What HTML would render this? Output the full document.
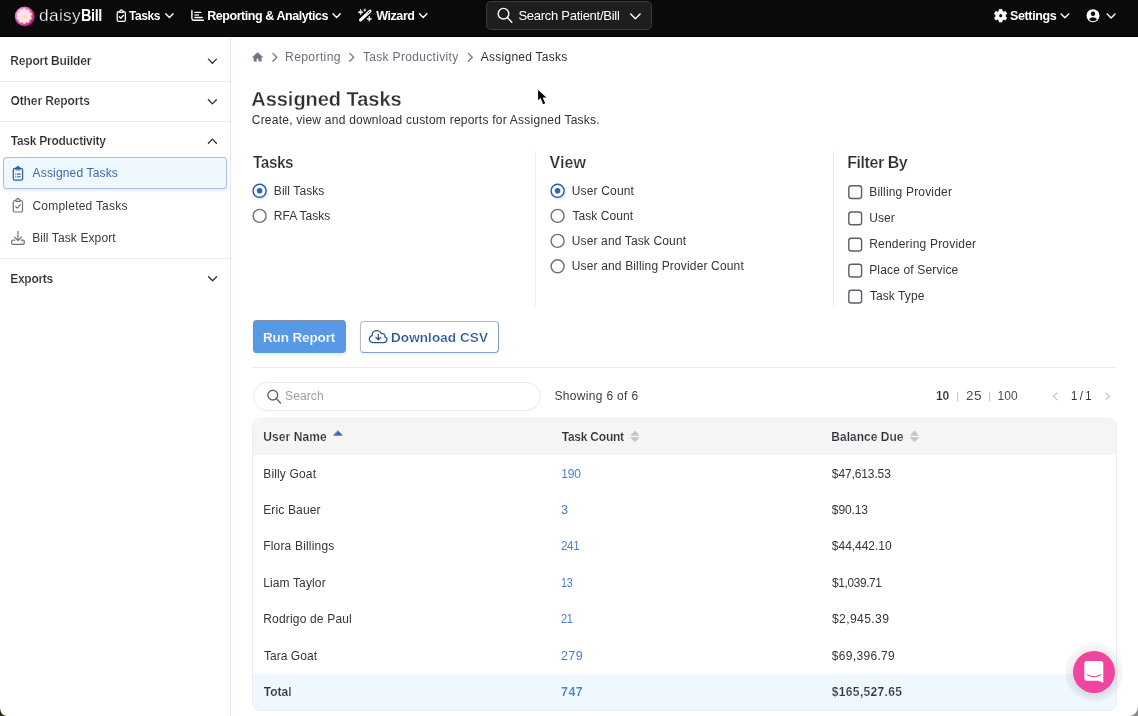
<!DOCTYPE html>
<html lang="en">
<head>
<meta charset="utf-8">
<title>Assigned Tasks - daisyBill</title>
<style>
*{box-sizing:border-box;margin:0;padding:0}
html,body{width:1138px;height:716px;overflow:hidden;background:#fff}
body{font-family:"Liberation Sans",Arial,sans-serif;color:#2f3037;font-size:12px;position:relative}
svg{display:block;position:absolute;overflow:visible}
#txt{position:absolute;left:0;top:0;width:1138px;height:716px;will-change:transform;z-index:5}
.x{position:absolute;white-space:nowrap;transform-origin:0 50%;z-index:5}

/* text classes */
.lg{font-size:17px;line-height:22px;color:#fff;-webkit-text-stroke:0.3px #0a0a0a}
.lgb{font-weight:bold;font-size:17px;line-height:22px;color:#fff}
.t{font-weight:bold;font-size:12.5px;line-height:16px;color:#fff}
.gs{font-size:13px;line-height:16px;color:#fff}
.sh{font-weight:bold;font-size:12px;line-height:16px;color:#2b2c33;-webkit-text-stroke:0.18px #fff}
.si{font-size:12px;line-height:16px;color:#3a3b43}
.bc{font-size:12px;line-height:16px;color:#6a6e80}
.h1{font-weight:bold;font-size:20px;line-height:26px;color:#2f3037;-webkit-text-stroke:0.3px #fff}
.sub{font-size:12px;line-height:16px;color:#2f3037}
.h2{font-weight:bold;font-size:16px;line-height:20px;color:#2f3037;-webkit-text-stroke:0.22px #fff}
.lbl{font-size:12px;line-height:16px;color:#34353d}
.btn{font-weight:bold;font-size:13.5px;line-height:18px}
.ph{font-size:12px;line-height:16px;color:#9a9ca8}
.pg{font-size:12px;line-height:16px;color:#4a4b55}
.th{font-weight:bold;font-size:12px;line-height:16px;color:#2f3037;-webkit-text-stroke:0.18px #f5f5f6}
.td{font-size:12px;line-height:16px;color:#34353d}

/* nav */
#nav{position:absolute;left:0;top:0;width:1138px;height:37px;background:#0a0a0a;border-bottom:1px solid #000}
#logo{position:absolute;left:39.5px;top:5px;font-size:17px;line-height:22px;color:#fff;white-space:nowrap;letter-spacing:-0.25px}
#gsearch{position:absolute;left:486px;top:1px;width:166px;height:29px;background:#1e1e1e;border:1px solid #3b3b3b;border-radius:5px}

/* sidebar */
#side{position:absolute;left:0;top:38px;width:231px;height:678px;border-right:1px solid #e6e8f0;background:#fff}
.sdiv{position:absolute;left:0;width:230px;height:1px;background:#e8e9f0}
#active{position:absolute;left:3.2px;top:157.2px;width:223.8px;height:32px;background:#f0f8ff;border:1px solid;border-color:#b0bccf #a6c1e6 #a6c1e6 #b0bccf;border-radius:4px;box-shadow:0 2px 3px rgba(200,225,250,.55)}

/* main */
.vd{position:absolute;top:151px;width:1px;height:156px;background:#ececf1}
.radio{position:absolute;width:14.4px;height:14.4px;border:1.4px solid #6b6d7a;border-radius:50%;background:#fff}
.radio.on{border-color:#2e62a8;box-shadow:0 0 0 2px rgba(190,215,245,.55)}
.radio.on:after{content:"";position:absolute;left:3px;top:3px;width:5.6px;height:5.6px;border-radius:50%;background:#2e62a8}
.cb{position:absolute;left:848.1px;width:14.2px;height:14.2px;border:1.4px solid #5c5e6b;border-radius:3.2px;background:#fff}
#run{position:absolute;left:252.8px;top:320.4px;width:93px;height:32.4px;background:#5899e6;border-radius:4px;border-top:1px solid #7f8b9e;border-left:1px solid #7f8b9e;box-shadow:0 2px 3px rgba(215,238,255,.9)}
#dl{position:absolute;left:360.4px;top:320.5px;width:138.4px;height:32px;background:#fff;border:1.2px solid;border-color:#b4b8c2 #7ea2d4 #7ea2d4 #b4b8c2;border-radius:4px;box-shadow:0 1px 2px rgba(215,238,255,.8)}
#hr{position:absolute;left:252px;top:367px;width:864px;height:1px;background:#ececf1}
#search{position:absolute;left:252.6px;top:382.2px;width:288px;height:28.5px;border:1px solid #e8e9ee;border-radius:15px;background:#fff}
.bar{position:absolute;top:392.2px;width:1px;height:8.4px;background:#bfc1ca}

/* table */
#tbl{position:absolute;left:252px;top:418px;width:864.6px;height:293px;border:1px solid #ececf0;border-radius:9px;overflow:hidden;background:#fff}
#thead{position:absolute;left:0;top:0;width:865px;height:35.5px;background:#f5f5f6}
#total{position:absolute;left:0;top:255px;width:865px;height:37px;background:#eff8ff}

#chat{position:absolute;left:1072.9px;top:650.7px;width:42.6px;height:42.6px;border-radius:50%;background:#f0449f;box-shadow:0 0 0 8px rgba(0,0,0,.028),0 2px 8px 2px rgba(0,0,0,.09)}
</style>
</head>
<body>

<!-- ================= NAV ================= -->
<div id="nav">
  <svg style="left:0;top:0" width="40" height="36" viewBox="0 0 40 36">
    <defs>
      <radialGradient id="fg" cx="0.42" cy="0.42" r="0.62">
        <stop offset="0" stop-color="#ffeaf6"/><stop offset="0.5" stop-color="#f394c8"/><stop offset="0.82" stop-color="#d43d8d"/><stop offset="1" stop-color="#8f2a66"/>
      </radialGradient>
    </defs>
    <circle cx="25.3" cy="17.2" r="9.6" fill="#7a1450" opacity="0.55"/>
    <circle cx="24.6" cy="16.4" r="9.8" fill="url(#fg)"/>
    <g fill="#ffe9f5" opacity="0.93" transform="translate(24.3 16.1)">
      <ellipse cx="0" cy="-4.5" rx="1.9" ry="3.3"/>
      <ellipse cx="0" cy="-4.5" rx="1.9" ry="3.3" transform="rotate(36)"/>
      <ellipse cx="0" cy="-4.5" rx="1.9" ry="3.3" transform="rotate(72)"/>
      <ellipse cx="0" cy="-4.5" rx="1.9" ry="3.3" transform="rotate(108)"/>
      <ellipse cx="0" cy="-4.5" rx="1.9" ry="3.3" transform="rotate(144)"/>
      <ellipse cx="0" cy="-4.5" rx="1.9" ry="3.3" transform="rotate(180)"/>
      <ellipse cx="0" cy="-4.5" rx="1.9" ry="3.3" transform="rotate(216)"/>
      <ellipse cx="0" cy="-4.5" rx="1.9" ry="3.3" transform="rotate(252)"/>
      <ellipse cx="0" cy="-4.5" rx="1.9" ry="3.3" transform="rotate(288)"/>
      <ellipse cx="0" cy="-4.5" rx="1.9" ry="3.3" transform="rotate(324)"/>
      <circle cx="0.4" cy="0.6" r="2.4" fill="#f8e58a" opacity="0.85"/>
    </g>
  </svg>
  <div id="gsearch"></div>
</div>

<!-- ================= SIDEBAR ================= -->
<div id="side">
  <div class="sdiv" style="top:42.5px"></div>
  <div class="sdiv" style="top:82.5px"></div>
  <div class="sdiv" style="top:220px"></div>
</div>
<div id="active"></div>

<!-- ================= MAIN ================= -->
<div class="vd" style="left:535px"></div>
<div class="vd" style="left:833px"></div>



<div id="run"></div>
<div id="dl"></div>
<div id="hr"></div>
<div id="search"></div>
<div class="bar" style="left:957.2px"></div>
<div class="bar" style="left:989.2px"></div>

<div id="tbl"><div id="thead"></div><div id="total"></div></div>

<div id="chat"></div>


<!-- ================= ICONS (page coordinates) ================= -->
<svg id="icons" width="1138" height="716" viewBox="0 0 1138 716" style="left:0;top:0;z-index:4" fill="none" stroke-linecap="round" stroke-linejoin="round">
  <!-- nav: chevrons -->
  <g stroke="#fff" stroke-width="1.4">
    <polyline points="165.7,13.7 169.4,17.4 173.1,13.7"/>
    <polyline points="332.9,13.8 336.6,17.5 340.3,13.8"/>
    <polyline points="419.5,13.8 423.2,17.5 426.9,13.8"/>
    <polyline points="630.7,14.1 635.4,18.8 640.1,14.1"/>
    <polyline points="1061.1,14 1064.9,17.8 1068.7,14"/>
    <polyline points="1107.2,14 1111.1,17.9 1115,14"/>
  </g>
  <!-- nav: clipboard-check (Tasks) -->
  <g stroke="#fff" stroke-width="1.3">
    <rect x="117.2" y="11.7" width="8.2" height="9.7" rx="1.6"/>
    <path d="M119.4,12.4 V11.4 a0.6,0.6 0 0 1 0.6,-0.6 h0.3 a1,1 0 0 1 2,0 h0.3 a0.6,0.6 0 0 1 0.6,0.6 V12.4 Z" fill="#0a0a0a"/>
    <polyline points="119.3,16.7 120.8,18.2 123.5,15.2"/>
  </g>
  <!-- nav: chart (Reporting) -->
  <g stroke="#fff" stroke-width="1.4">
    <path d="M191.9,10.5 V18.3 a1.9,1.9 0 0 0 1.9,1.9 H203.4"/>
    <path d="M194.9,12.4 H200.7 M194.9,17.5 H202.2"/>
    <path d="M194.9,15 H198.5" stroke="#d8d8d8"/>
  </g>
  <!-- nav: wand (Wizard) -->
  <g>
    <line x1="360.4" y1="20.1" x2="370.1" y2="11.1" stroke="#fff" stroke-width="2.9"/>
    <line x1="367.9" y1="13.2" x2="369.6" y2="11.6" stroke="#0a0a0a" stroke-width="0.9"/>
    <path d="M360.6,9.7 Q360.6,12.2 363.1,12.2 Q360.6,12.2 360.6,14.7 Q360.6,12.2 358.1,12.2 Q360.6,12.2 360.6,9.7Z" fill="#fff" stroke="#fff" stroke-width="0.7"/>
    <path d="M364.8,8.9 Q364.8,10.2 366.1,10.2 Q364.8,10.2 364.8,11.5 Q364.8,10.2 363.5,10.2 Q364.8,10.2 364.8,8.9Z" fill="#fff" stroke="#fff" stroke-width="0.5"/>
    <path d="M369.3,16.4 Q369.3,18.9 371.8,18.9 Q369.3,18.9 369.3,21.4 Q369.3,18.9 366.8,18.9 Q369.3,18.9 369.3,16.4Z" fill="#fff" stroke="#fff" stroke-width="0.7"/>
  </g>
  <!-- nav: search -->
  <g stroke="#fff" stroke-width="1.4">
    <circle cx="503.5" cy="13.7" r="5.3"/>
    <line x1="507.4" y1="17.6" x2="511.8" y2="22.2"/>
  </g>
  <!-- nav: gear -->
  <path fill="#fff" fill-rule="evenodd" stroke="#fff" stroke-width="0.9" d="M999.05,11.26 L999.27,9.44 L1001.93,9.44 L1002.15,11.26 L1003.67,12.14 L1005.36,11.42 L1006.69,13.72 L1005.22,14.82 L1005.22,16.58 L1006.69,17.68 L1005.36,19.98 L1003.67,19.26 L1002.15,20.14 L1001.93,21.96 L999.27,21.96 L999.05,20.14 L997.53,19.26 L995.84,19.98 L994.51,17.68 L995.98,16.58 L995.98,14.82 L994.51,13.72 L995.84,11.42 L997.53,12.14Z M998.55,15.70 a2.05,2.05 0 1 0 4.1,0 a2.05,2.05 0 1 0 -4.1,0Z"/>
  <!-- nav: user -->
  <circle cx="1093" cy="15.7" r="6.5" fill="#fff"/>
  <circle cx="1093" cy="13.8" r="2.25" fill="#0a0a0a"/>
  <path d="M1089.2,19.6 c0.6,-1.5 2,-2.3 3.8,-2.3 s3.2,0.8 3.8,2.3 c-0.9,1 -2.2,1.6 -3.8,1.6 s-2.9,-0.6 -3.8,-1.6z" fill="#0a0a0a"/>

  <!-- sidebar chevrons -->
  <g stroke="#2f3037" stroke-width="1.3">
    <polyline points="208.4,59.1 212.4,63.2 216.4,59.1"/>
    <polyline points="208.4,99.8 212.4,103.9 216.4,99.8"/>
    <polyline points="208.4,143.2 212.4,139.1 216.4,143.2"/>
    <polyline points="208.6,276.7 212.6,280.8 216.6,276.7"/>
  </g>
  <!-- sidebar: clipboard-list (active) -->
  <g stroke="#33609f" stroke-width="1.3">
    <rect x="13.3" y="168.4" width="9.3" height="11.8" rx="1.7"/>
    <path d="M15.7,169.6 V168 a0.5,0.5 0 0 1 0.5,-0.5 h0.5 a1.25,1.25 0 0 1 2.5,0 h0.5 a0.5,0.5 0 0 1 0.5,0.5 V169.6 Z" fill="#33609f" stroke-width="0.8"/>
    <path d="M17.4,174.1 H20.3 M17.4,176.8 H20.3" stroke-width="1.1"/>
    <path d="M15.7,174.1 h0.01 M15.7,176.8 h0.01" stroke-width="1.3"/>
  </g>
  <!-- sidebar: clipboard-check -->
  <g stroke="#6f7384" stroke-width="1.2">
    <rect x="13.3" y="200.5" width="9.2" height="11.5" rx="1.6"/>
    <path d="M15.8,201.3 V200.1 a0.5,0.5 0 0 1 0.5,-0.5 h0.4 a1.2,1.2 0 0 1 2.4,0 h0.4 a0.5,0.5 0 0 1 0.5,0.5 V201.3 Z" fill="#fff"/>
    <polyline points="15.7,206.7 17.2,208.2 20.3,204.7"/>
  </g>
  <!-- sidebar: download tray -->
  <g stroke="#6f7384" stroke-width="1.2">
    <path d="M18,231.3 V240.3 M14.5,237.1 L18,240.6 L21.5,237.1"/>
    <path d="M14.9,240.1 H13.1 a1.4,1.4 0 0 0 -1.4,1.4 V243 a1.4,1.4 0 0 0 1.4,1.4 H22.9 a1.4,1.4 0 0 0 1.4,-1.4 V241.5 a1.4,1.4 0 0 0 -1.4,-1.4 H21.1"/>
    <path d="M22.2,242.3 h0.01" stroke-width="1.1"/>
  </g>

  <!-- radios -->
  <g stroke-width="1.4">
    <circle cx="260" cy="191.5" r="7.3" stroke="#dcebfb" stroke-width="1.6"/>
    <circle cx="558" cy="191.5" r="7.3" stroke="#dcebfb" stroke-width="1.6"/>
    <circle cx="259.6" cy="190.8" r="6.5" stroke="#2d5f9f" fill="#fff"/>
    <circle cx="259.6" cy="190.8" r="2.8" fill="#2f67b5"/>
    <circle cx="259.6" cy="215.9" r="6.5" stroke="#6d6f7c" fill="#fff"/>
    <circle cx="557.6" cy="190.8" r="6.5" stroke="#2d5f9f" fill="#fff"/>
    <circle cx="557.6" cy="190.8" r="2.8" fill="#2f67b5"/>
    <circle cx="557.6" cy="215.9" r="6.5" stroke="#6d6f7c" fill="#fff"/>
    <circle cx="557.6" cy="240.9" r="6.5" stroke="#6d6f7c" fill="#fff"/>
    <circle cx="557.6" cy="266.3" r="6.5" stroke="#6d6f7c" fill="#fff"/>
  </g>
  <!-- checkboxes -->
  <g stroke="#5c5e6b" stroke-width="1.4" fill="#fff">
    <rect x="848.8" y="185.7" width="12.8" height="12.8" rx="2.6"/>
    <rect x="848.8" y="212" width="12.8" height="12.8" rx="2.6"/>
    <rect x="848.8" y="238.2" width="12.8" height="12.8" rx="2.6"/>
    <rect x="848.8" y="264.2" width="12.8" height="12.8" rx="2.6"/>
    <rect x="848.8" y="290.2" width="12.8" height="12.8" rx="2.6"/>
  </g>

  <!-- breadcrumb -->
  <path d="M257.6,52.6 L252.4,57.3 H253.9 V61.3 H256.5 V58.5 H258.7 V61.3 H261.3 V57.3 H262.8 Z" fill="#6f7384" stroke="#6f7384" stroke-width="0.4"/>
  <g stroke="#737787" stroke-width="1.3">
    <polyline points="272.9,53.4 276.8,57.3 272.9,61.2"/>
    <polyline points="349.8,53.4 353.7,57.3 349.8,61.2"/>
    <polyline points="468.4,53.4 472.3,57.3 468.4,61.2"/>
  </g>

  <!-- cloud download -->
  <g stroke="#2c5795" stroke-width="1.25">
    <path transform="translate(367.37 327) scale(0.9026 0.8)" vector-effect="non-scaling-stroke" d="M6.75 19.5a4.5 4.5 0 0 1-1.41-8.775 5.25 5.25 0 0 1 10.233-2.33 3 3 0 0 1 3.758 3.848A3.752 3.752 0 0 1 18 19.5H6.75Z"/>
    <path d="M378.3,334.3 V339.7 M375.9,337.5 L378.3,339.9 L380.7,337.5"/>
  </g>

  <!-- table search -->
  <g stroke="#62646f" stroke-width="1.4">
    <circle cx="272.8" cy="395.1" r="4.9"/>
    <line x1="276.4" y1="398.8" x2="280.6" y2="403.1"/>
  </g>

  <!-- sort icons -->
  <path d="M338.1,430.9 L342.1,435.2 H334.1 Z" fill="#3a6fb5" stroke="#3a6fb5" stroke-width="0.9"/>
  <g fill="#c4c5cd" stroke="#c4c5cd" stroke-width="0.8">
    <path d="M635.1,431.1 L638.9,435.3 H631.3 Z"/>
    <path d="M635.1,441.8 L638.9,437.6 H631.3 Z"/>
    <path d="M914.6,431.1 L918.4,435.3 H910.8 Z"/>
    <path d="M914.6,441.8 L918.4,437.6 H910.8 Z"/>
  </g>

  <!-- pagination chevrons -->
  <g stroke="#c0c2cb" stroke-width="1.2">
    <polyline points="1057,393.2 1053.5,396.4 1057,399.6"/>
    <polyline points="1106.1,393.2 1109.6,396.4 1106.1,399.6"/>
  </g>

  <!-- chat bubble glyph -->
  <path d="M1086.8,661.1 H1100.8 a2.5,2.5 0 0 1 2.5,2.5 V682.8 L1098.4,680.7 H1086.8 a2.5,2.5 0 0 1 -2.5,-2.5 V663.6 a2.5,2.5 0 0 1 2.5,-2.5 z" fill="#fff"/>
  <path d="M1087.5,674.8 Q1094,678.8 1100.5,674.8" stroke="#f0469f" stroke-width="1.2"/>

  <!-- mouse cursor -->
  <path d="M538.1,89.9 V100.2 L540.6,98.1 L543.1,104.2 L545.2,103.3 L542.6,97.6 L546.4,97.6 Z" fill="#000" stroke="#fff" stroke-width="1.6" stroke-linejoin="miter" paint-order="stroke"/>

  <!-- screenshot corner artefacts -->
  <path d="M0,708 Q0.5,715.5 6.5,716 L0,716 Z" fill="#2a2a12"/>
  <path d="M1138,706 Q1137.5,715.5 1129,716 L1138,716 Z" fill="#8a8a8a"/>
</svg>

<!-- ================= TEXT ================= -->
<div id="txt">
<div class="x lg" style="left:39.21px;top:5px;letter-spacing:0.350px;transform:scaleX(1.0156);">daisy</div>
<div class="x lgb" style="left:80.67px;top:5px;letter-spacing:-0.450px;transform:scaleX(0.8527);">Bill</div>
<div class="x t" style="left:129.30px;top:8px;letter-spacing:-0.450px;transform:scaleX(0.9568);">Tasks</div>
<div class="x t" style="left:207.26px;top:8px;letter-spacing:-0.450px;">Reporting &amp; Analytics</div>
<div class="x t" style="left:376.13px;top:8px;letter-spacing:-0.399px;">Wizard</div>
<div class="x gs" style="left:518.43px;top:8px;letter-spacing:-0.271px;">Search Patient/Bill</div>
<div class="x t" style="left:1009.92px;top:8px;letter-spacing:-0.342px;">Settings</div>
<div class="x sh" style="left:10.29px;top:53px;letter-spacing:-0.171px;">Report Builder</div>
<div class="x sh" style="left:10.50px;top:93px;letter-spacing:-0.114px;">Other Reports</div>
<div class="x sh" style="left:10.69px;top:133px;letter-spacing:-0.244px;">Task Productivity</div>
<div class="x si" style="left:32.59px;top:165px;letter-spacing:0.158px;color:#3c6bb0">Assigned Tasks</div>
<div class="x si" style="left:32.39px;top:198px;letter-spacing:0.236px;">Completed Tasks</div>
<div class="x si" style="left:32.21px;top:230px;letter-spacing:0.107px;">Bill Task Export</div>
<div class="x sh" style="left:10.29px;top:271px;letter-spacing:-0.293px;">Exports</div>
<div class="x bc" style="left:285.21px;top:49px;letter-spacing:0.350px;transform:scaleX(1.0132);">Reporting</div>
<div class="x bc" style="left:362.93px;top:49px;letter-spacing:0.329px;">Task Productivity</div>
<div class="x bc" style="left:480.85px;top:49px;letter-spacing:0.251px;color:#2f3037">Assigned Tasks</div>
<div class="x h1" style="left:251.30px;top:86px;letter-spacing:-0.038px;">Assigned Tasks</div>
<div class="x sub" style="left:251.74px;top:112px;letter-spacing:0.237px;">Create, view and download custom reports for Assigned Tasks.</div>
<div class="x h2" style="left:252.71px;top:153px;letter-spacing:-0.450px;transform:scaleX(0.9575);">Tasks</div>
<div class="x h2" style="left:549.59px;top:153px;letter-spacing:0.037px;">View</div>
<div class="x h2" style="left:847.24px;top:153px;letter-spacing:-0.450px;">Filter By</div>
<div class="x lbl" style="left:273.81px;top:183px;letter-spacing:0.077px;">Bill Tasks</div>
<div class="x lbl" style="left:273.81px;top:208px;letter-spacing:0.006px;">RFA Tasks</div>
<div class="x lbl" style="left:571.73px;top:183px;letter-spacing:0.164px;">User Count</div>
<div class="x lbl" style="left:572.47px;top:208px;letter-spacing:0.065px;">Task Count</div>
<div class="x lbl" style="left:571.73px;top:233px;letter-spacing:0.138px;">User and Task Count</div>
<div class="x lbl" style="left:571.73px;top:258px;letter-spacing:0.154px;">User and Billing Provider Count</div>
<div class="x lbl" style="left:869.21px;top:184px;letter-spacing:0.179px;">Billing Provider</div>
<div class="x lbl" style="left:869.22px;top:210px;letter-spacing:0.096px;">User</div>
<div class="x lbl" style="left:869.21px;top:236px;letter-spacing:0.203px;">Rendering Provider</div>
<div class="x lbl" style="left:869.21px;top:262px;letter-spacing:0.159px;">Place of Service</div>
<div class="x lbl" style="left:869.93px;top:288px;letter-spacing:0.077px;">Task Type</div>
<div class="x btn" style="left:262.98px;top:329px;letter-spacing:-0.129px;color:#fff;-webkit-text-stroke:0.2px #5899e6">Run Report</div>
<div class="x btn" style="left:391.05px;top:329px;letter-spacing:0.076px;color:#2c5795;-webkit-text-stroke:0.2px #fff">Download CSV</div>
<div class="x ph" style="left:285.08px;top:388px;letter-spacing:0.112px;">Search</div>
<div class="x pg" style="left:554.41px;top:388px;letter-spacing:0.329px;color:#3c3d46">Showing 6 of 6</div>
<div class="x pg" style="left:935.95px;top:388px;letter-spacing:-0.215px;font-weight:bold;color:#2f3037;-webkit-text-stroke:0.18px #fff">10</div>
<div class="x pg" style="left:966.07px;top:388px;letter-spacing:0.350px;transform:scaleX(1.1252);">25</div>
<div class="x pg" style="left:997.40px;top:388px;letter-spacing:0.170px;">100</div>
<div class="x pg" style="left:1071.02px;top:388px;letter-spacing:-0.350px;transform:scaleX(0.9360);color:#2f3037">1 / 1</div>
<div class="x th" style="left:263.28px;top:429px;letter-spacing:0.076px;">User Name</div>
<div class="x th" style="left:561.69px;top:429px;letter-spacing:-0.229px;">Task Count</div>
<div class="x th" style="left:831.29px;top:429px;letter-spacing:0.009px;">Balance Due</div>
<div class="x td" style="left:263.22px;top:466px;letter-spacing:0.161px;">Billy Goat</div>
<div class="x td" style="left:561.21px;top:466px;letter-spacing:-0.118px;color:#4b7ec2">190</div>
<div class="x td" style="left:831.87px;top:466px;letter-spacing:-0.119px;">$47,613.53</div>
<div class="x td" style="left:263.22px;top:502px;letter-spacing:0.142px;">Eric Bauer</div>
<div class="x td" style="left:560.97px;top:502px;letter-spacing:0.350px;transform:scaleX(1.0629);color:#4b7ec2">3</div>
<div class="x td" style="left:831.87px;top:502px;letter-spacing:-0.139px;">$90.13</div>
<div class="x td" style="left:263.22px;top:538px;letter-spacing:0.180px;">Flora Billings</div>
<div class="x td" style="left:561.28px;top:538px;letter-spacing:-0.350px;transform:scaleX(0.9610);color:#4b7ec2">241</div>
<div class="x td" style="left:831.87px;top:538px;letter-spacing:-0.039px;">$44,442.10</div>
<div class="x td" style="left:263.22px;top:575px;letter-spacing:0.128px;">Liam Taylor</div>
<div class="x td" style="left:560.73px;top:575px;letter-spacing:-0.350px;transform:scaleX(0.8974);color:#4b7ec2">13</div>
<div class="x td" style="left:831.87px;top:575px;letter-spacing:-0.350px;transform:scaleX(0.9865);">$1,039.71</div>
<div class="x td" style="left:263.22px;top:611px;letter-spacing:0.177px;">Rodrigo de Paul</div>
<div class="x td" style="left:561.35px;top:611px;letter-spacing:-0.350px;transform:scaleX(0.9154);color:#4b7ec2">21</div>
<div class="x td" style="left:831.86px;top:611px;letter-spacing:0.350px;transform:scaleX(1.0138);">$2,945.39</div>
<div class="x td" style="left:263.88px;top:648px;letter-spacing:0.059px;">Tara Goat</div>
<div class="x td" style="left:561.15px;top:648px;letter-spacing:0.350px;transform:scaleX(1.0465);color:#4b7ec2">279</div>
<div class="x td" style="left:831.87px;top:648px;letter-spacing:0.317px;">$69,396.79</div>
<div class="x td" style="left:263.84px;top:684px;letter-spacing:-0.006px;font-weight:bold;-webkit-text-stroke:0.18px #eff8ff">Total</div>
<div class="x td" style="left:561.18px;top:684px;letter-spacing:0.450px;transform:scaleX(1.0371);font-weight:bold;color:#4b7ec2;-webkit-text-stroke:0.18px #eff8ff">747</div>
<div class="x td" style="left:831.85px;top:684px;letter-spacing:0.336px;font-weight:bold;-webkit-text-stroke:0.18px #eff8ff">$165,527.65</div>
</div>

</body>
</html>
